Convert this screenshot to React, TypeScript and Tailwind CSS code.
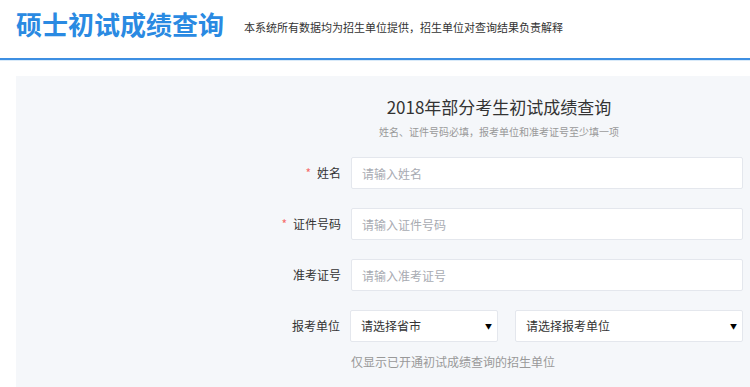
const font = { fontFamily: '"Noto Sans CJK SC", "Noto Sans", sans-serif' };

const Field = ({ label, required, placeholder }: { label: string; required?: boolean; placeholder: string }) => (
  <div className="flex items-center h-8">
    <div className="w-[96px] pr-[10px] text-right text-[12px] text-[#333]">
      {required && <span className="text-[#f56c6c] mr-[6px]">*</span>}
      {label}
    </div>
    <input
      className="w-[392px] h-8 px-[10px] bg-white border border-[#e4e7ed] rounded-[2px] text-[12px] outline-none placeholder:text-[#a8abb2]"
      placeholder={placeholder}
      style={font}
    />
  </div>
);

const Select = ({ text, width }: { text: string; width: string }) => (
  <div className={`${width} h-8 pl-[10px] pr-[5px] bg-white border border-[#e4e7ed] rounded-[2px] flex items-center justify-between text-[12px] text-[#333]`}>
    <span>{text}</span>
    <span className="text-[7px] text-black">▼</span>
  </div>
);

export default function App() {
  return (
    <div className="w-[750px] h-[387px] bg-white overflow-hidden" style={font}>
      <div className="h-[58px] flex items-start px-4 pt-[10px]">
        <h1 className="text-[26px] font-bold text-[#2a8ae2] leading-[28px]">硕士初试成绩查询</h1>
        <p className="ml-[20px] mt-[9px] text-[11px] text-[#333] leading-[16px]">本系统所有数据均为招生单位提供，招生单位对查询结果负责解释</p>
      </div>
      <div className="h-[2px] bg-[#3d8fe2]" />
      <div className="h-[1px] bg-[#d9eaf9]" />
      <div className="pl-4 pt-[15px]">
        <div className="bg-[#f5f7fa] h-[320px] pl-[239px] pt-[19px]">
          <div className="w-[488px]">
            <h2 className="text-center text-[17px] text-[#333] leading-[24px]">2018年部分考生初试成绩查询</h2>
            <p className="text-center text-[10px] text-[#999] mt-[6px] leading-[14px]">姓名、证件号码必填，报考单位和准考证号至少填一项</p>
            <div className="mt-[18px] flex flex-col gap-[19px]">
              <Field label="姓名" required placeholder="请输入姓名" />
              <Field label="证件号码" required placeholder="请输入证件号码" />
              <Field label="准考证号" placeholder="请输入准考证号" />
              <div className="flex items-center h-8">
                <div className="w-[96px] pr-[10px] text-right text-[12px] text-[#333]">报考单位</div>
                <div className="flex gap-[17px]">
                  <Select text="请选择省市" width="w-[148px]" />
                  <Select text="请选择报考单位" width="w-[228px]" />
                </div>
              </div>
            </div>
            <p className="ml-[96px] mt-[11px] text-[12px] text-[#999]">仅显示已开通初试成绩查询的招生单位</p>
          </div>
        </div>
      </div>
    </div>
  );
}
